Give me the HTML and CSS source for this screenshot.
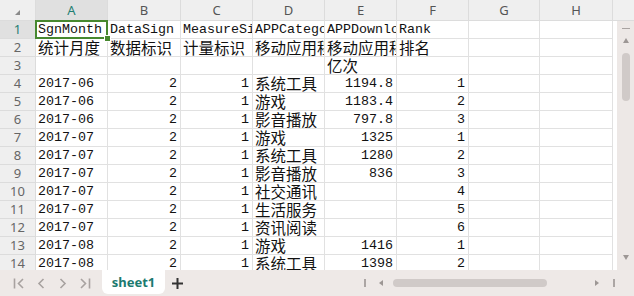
FILE: index.html
```html
<!DOCTYPE html>
<html>
<head>
<meta charset="utf-8">
<link rel="stylesheet" href="styles.css">
</head>
<body>
<div class="app">
  <div class="main">
    <div class="grid">
      <div class="h corner"><span class="tri"></span></div>
      <div class="h sel-h">A</div><div class="h">B</div><div class="h">C</div><div class="h">D</div><div class="h">E</div><div class="h">F</div><div class="h">G</div><div class="h">H</div>

      <div class="rh sel-h">1</div>
      <div class="c a1">SgnMonth<div class="sel"><span class="handle"></span></div></div><div class="c">DataSign</div><div class="c">MeasureSign</div><div class="c">APPCategory</div><div class="c">APPDownloads</div><div class="c">Rank</div><div class="c"></div><div class="c"></div>

      <div class="rh">2</div>
      <div class="c k">统计月度</div><div class="c k">数据标识</div><div class="c k">计量标识</div><div class="c k">移动应用程序类别</div><div class="c k">移动应用程序下载量</div><div class="c k">排名</div><div class="c"></div><div class="c"></div>

      <div class="rh">3</div>
      <div class="c"></div><div class="c"></div><div class="c"></div><div class="c"></div><div class="c k">亿次</div><div class="c"></div><div class="c"></div><div class="c"></div>

      <div class="rh">4</div>
      <div class="c">2017-06</div><div class="c n">2</div><div class="c n">1</div><div class="c k">系统工具</div><div class="c n">1194.8</div><div class="c n">1</div><div class="c"></div><div class="c"></div>

      <div class="rh">5</div>
      <div class="c">2017-06</div><div class="c n">2</div><div class="c n">1</div><div class="c k">游戏</div><div class="c n">1183.4</div><div class="c n">2</div><div class="c"></div><div class="c"></div>

      <div class="rh">6</div>
      <div class="c">2017-06</div><div class="c n">2</div><div class="c n">1</div><div class="c k">影音播放</div><div class="c n">797.8</div><div class="c n">3</div><div class="c"></div><div class="c"></div>

      <div class="rh">7</div>
      <div class="c">2017-07</div><div class="c n">2</div><div class="c n">1</div><div class="c k">游戏</div><div class="c n">1325</div><div class="c n">1</div><div class="c"></div><div class="c"></div>

      <div class="rh">8</div>
      <div class="c">2017-07</div><div class="c n">2</div><div class="c n">1</div><div class="c k">系统工具</div><div class="c n">1280</div><div class="c n">2</div><div class="c"></div><div class="c"></div>

      <div class="rh">9</div>
      <div class="c">2017-07</div><div class="c n">2</div><div class="c n">1</div><div class="c k">影音播放</div><div class="c n">836</div><div class="c n">3</div><div class="c"></div><div class="c"></div>

      <div class="rh">10</div>
      <div class="c">2017-07</div><div class="c n">2</div><div class="c n">1</div><div class="c k">社交通讯</div><div class="c n"></div><div class="c n">4</div><div class="c"></div><div class="c"></div>

      <div class="rh">11</div>
      <div class="c">2017-07</div><div class="c n">2</div><div class="c n">1</div><div class="c k">生活服务</div><div class="c n"></div><div class="c n">5</div><div class="c"></div><div class="c"></div>

      <div class="rh">12</div>
      <div class="c">2017-07</div><div class="c n">2</div><div class="c n">1</div><div class="c k">资讯阅读</div><div class="c n"></div><div class="c n">6</div><div class="c"></div><div class="c"></div>

      <div class="rh">13</div>
      <div class="c">2017-08</div><div class="c n">2</div><div class="c n">1</div><div class="c k">游戏</div><div class="c n">1416</div><div class="c n">1</div><div class="c"></div><div class="c"></div>

      <div class="rh">14</div>
      <div class="c">2017-08</div><div class="c n">2</div><div class="c n">1</div><div class="c k">系统工具</div><div class="c n">1398</div><div class="c n">2</div><div class="c"></div><div class="c"></div>
    </div>
    <div class="vs">
      <div class="vs-head"></div>
      <div class="vs-body">
        <div class="vs-track">
          <span class="vs-min"></span>
          <svg class="vs-up" width="6" height="5" viewBox="0 0 6 5"><path d="M3 0 L6 5 L0 5 Z" fill="#9d9795"/></svg>
          <span class="vs-thumb"></span>
          <svg class="vs-down" width="6" height="5" viewBox="0 0 6 5"><path d="M0 0 L6 0 L3 5 Z" fill="#9d9795"/></svg>
        </div>
      </div>
    </div>
  </div>
  <div class="bar">
    <div class="nav">
      <span class="nb"><svg width="12" height="11" viewBox="0 0 12 11"><path d="M1.5 0.5 V10.5 M10 1 L5.5 5.5 L10 10" fill="none" stroke="#a8a2a0" stroke-width="1.6"/></svg></span>
      <span class="nb"><svg width="8" height="11" viewBox="0 0 8 11"><path d="M6.5 1 L2 5.5 L6.5 10" fill="none" stroke="#a8a2a0" stroke-width="1.6"/></svg></span>
      <span class="nb"><svg width="8" height="11" viewBox="0 0 8 11"><path d="M1.5 1 L6 5.5 L1.5 10" fill="none" stroke="#a8a2a0" stroke-width="1.6"/></svg></span>
      <span class="nb"><svg width="12" height="11" viewBox="0 0 12 11"><path d="M10.5 0.5 V10.5 M2 1 L6.5 5.5 L2 10" fill="none" stroke="#a8a2a0" stroke-width="1.6"/></svg></span>
    </div>
    <div class="tab">sheet1</div>
    <span class="plus"><svg width="11" height="11" viewBox="0 0 11 11"><path d="M5.5 0 V11 M0 5.5 H11" stroke="#333" stroke-width="2"/></svg></span>
    <div class="hs">
      <span class="hs-bar"></span>
      <svg class="hs-l" width="4" height="6" viewBox="0 0 4 6"><path d="M4 0 L4 6 L0 3 Z" fill="#9d9795"/></svg>
      <span class="hs-thumb"></span>
      <svg class="hs-r" width="4" height="6" viewBox="0 0 4 6"><path d="M0 0 L0 6 L4 3 Z" fill="#9d9795"/></svg>
      <span class="hs-bar hs-bar2"></span>
    </div>
  </div>
</div>
</body>
</html>
```
FILE: styles.css
```css
html, body {
  margin: 0;
  padding: 0;
  background: #ffffff;
}

.app {
  width: 634px;
  height: 296px;
  display: flex;
  flex-direction: column;
  overflow: hidden;
}

.main {
  height: 270px;
  display: flex;
  overflow: hidden;
}

.grid {
  width: 613px;
  flex: none;
  display: grid;
  grid-template-columns: 36px 72px 73px 72px 72px 72px 72px 71px 73px;
  grid-template-rows: 21px repeat(14, 18px);
  align-content: start;
}

.h, .rh {
  box-sizing: border-box;
  background: #efefef;
  border-right: 1px solid #dcdcdc;
  border-bottom: 1px solid #dcdcdc;
  font-family: "Noto Sans", "Open Sans", sans-serif;
  font-size: 13px;
  color: #555555;
  text-align: center;
  overflow: hidden;
}

.h {
  line-height: 20px;
}

.rh {
  line-height: 17px;
  color: #666666;
}

.sel-h {
  background: #e0e0e0;
  color: #1f7f73;
}

.corner {
  position: relative;
}

.tri {
  position: absolute;
  left: 15px;
  top: 10px;
  width: 0;
  height: 0;
  border-left: 5px solid transparent;
  border-bottom: 5px solid #8a8a8a;
}

.c {
  box-sizing: border-box;
  border-right: 1px solid #e1e1e1;
  border-bottom: 1px solid #e1e1e1;
  padding: 0 1px 0 2px;
  font-family: "Liberation Mono", "Noto Sans CJK SC", monospace;
  font-size: 13.33px;
  line-height: 17px;
  color: #111111;
  white-space: nowrap;
  overflow: hidden;
}

.c.k {
  font-family: "Noto Sans CJK SC", sans-serif;
  font-size: 15.5px;
  line-height: 17px;
}

.c.n {
  text-align: right;
  padding: 0 3px 0 2px;
}

.a1 {
  position: relative;
  overflow: visible;
}

.sel {
  position: absolute;
  left: -1px;
  top: -1px;
  width: 73px;
  height: 19px;
  box-sizing: border-box;
  border: 2px solid #47882f;
  z-index: 2;
}

.handle {
  position: absolute;
  right: -5px;
  bottom: -5px;
  width: 5px;
  height: 5px;
  background: #47882f;
  border: 1px solid #ffffff;
}

.vs {
  flex: 1;
  display: flex;
  flex-direction: column;
}

.vs-head {
  height: 20px;
  flex: none;
  background: #f0f0f0;
  border-bottom: 1px solid #dcdcdc;
}

.vs-body {
  flex: 1;
  display: flex;
  padding-left: 4px;
  background: #ffffff;
}

.vs-track {
  flex: 1;
  background: #ede8e6;
  display: flex;
  flex-direction: column;
  align-items: center;
}

.vs-min {
  margin-top: 7px;
  width: 8px;
  height: 1px;
  background: #a9a3a1;
}

.vs-up {
  margin-top: 9px;
}

.vs-thumb {
  margin-top: 10px;
  width: 8px;
  height: 48px;
  border-radius: 4px;
  background: #d0cac8;
}

.vs-down {
  margin-top: auto;
  margin-bottom: 10px;
}

.bar {
  height: 26px;
  flex: none;
  background: #eee9e7;
  display: flex;
  align-items: flex-start;
}

.nav {
  display: flex;
  padding-left: 8px;
  height: 26px;
  align-items: center;
}

.nb {
  width: 22px;
  height: 26px;
  display: flex;
  align-items: center;
  justify-content: center;
}

.tab {
  margin-left: 6px;
  width: 63px;
  height: 24px;
  background: #ffffff;
  border-radius: 0 0 6px 6px;
  font-family: "Noto Sans", "Open Sans", sans-serif;
  font-weight: bold;
  font-size: 13px;
  line-height: 24px;
  color: #1c7a6f;
  text-align: center;
}

.plus {
  margin-left: 7px;
  height: 26px;
  display: flex;
  align-items: center;
}

.hs {
  margin-left: auto;
  height: 26px;
  display: flex;
  align-items: center;
  padding-right: 19px;
}

.hs-bar {
  width: 2px;
  height: 8px;
  background: #aca6a4;
}

.hs-l {
  margin-left: 13px;
}

.hs-thumb {
  margin-left: 10px;
  width: 154px;
  height: 8px;
  border-radius: 4px;
  background: #d0cac8;
}

.hs-r {
  margin-left: 48px;
}

.hs-bar2 {
  margin-left: 14px;
}
```
